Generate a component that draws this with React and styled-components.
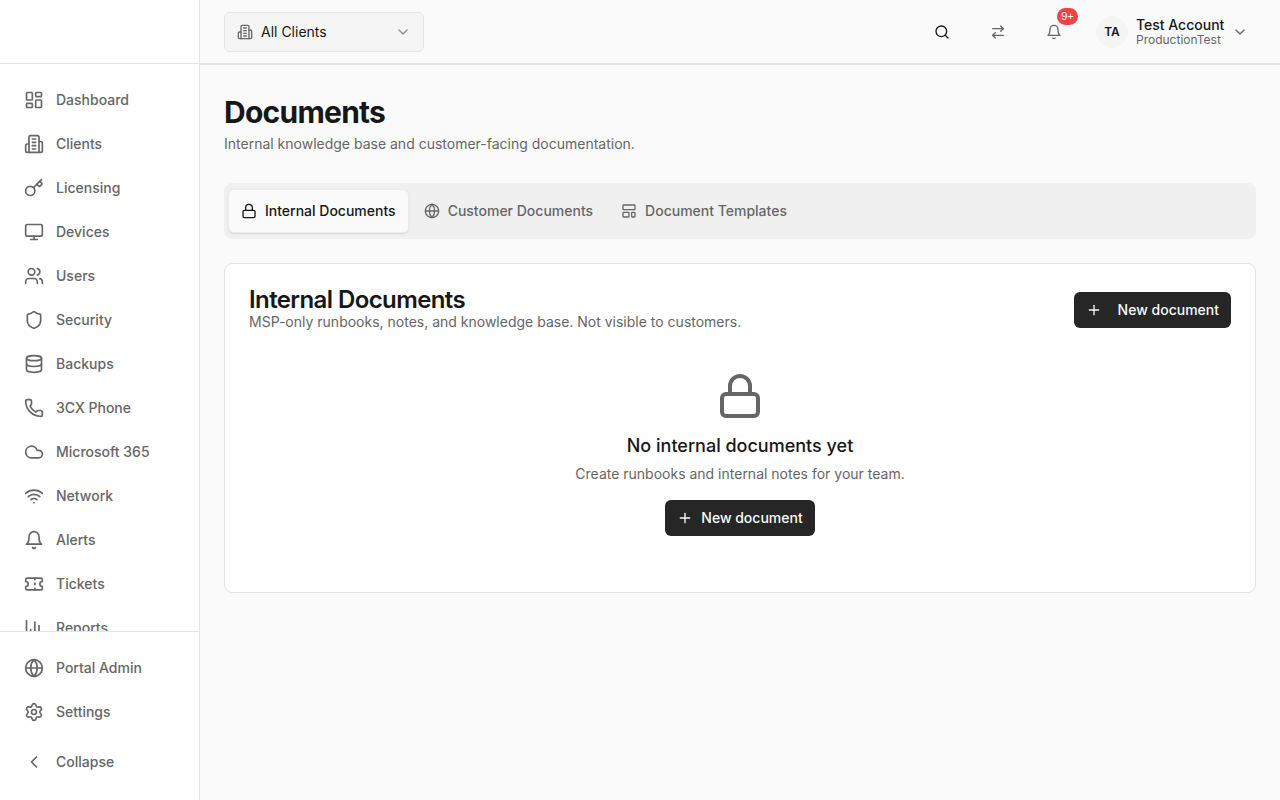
import styled, { createGlobalStyle } from "styled-components";
import {
  LayoutDashboard, Key, Monitor, Users, Shield, Database, Phone, Cloud, Wifi,
  Ticket, ChartColumn, Globe, Settings, ChevronLeft, ChevronDown, Search, ArrowRightLeft,
  Lock, LayoutTemplate, Plus,
} from "lucide-react";

const GlobalStyle = createGlobalStyle`
  * { box-sizing: border-box; }
  html, body { margin: 0; height: 100%; }
  body {
    font-family: Inter, "Liberation Sans", sans-serif;
    background: #fafafa;
    color: #171717;
  }
`;

const Shell = styled.div`
  display: flex;
  height: 800px;
  overflow: hidden;
`;

const Sidebar = styled.aside`
  width: 200px;
  flex-shrink: 0;
  display: flex;
  flex-direction: column;
  background: #fff;
  border-right: 1px solid #e5e5e5;
`;

const LogoArea = styled.div`
  height: 64px;
  flex-shrink: 0;
  border-bottom: 1px solid #e5e5e5;
`;

const NavScroll = styled.nav`
  flex: 1;
  min-height: 0;
  overflow: hidden;
  padding-top: 14px;
`;

const NavItem = styled.a`
  display: flex;
  align-items: center;
  gap: 12px;
  height: 44px;
  padding-left: 24px;
  font-size: 14px;
  line-height: 20px;
  font-weight: 500;
  color: #666;
  svg { flex-shrink: 0; }
`;

const SideFooter = styled.div`
  flex-shrink: 0;
  height: 169px;
  padding-top: 14px;
  border-top: 1px solid #e5e5e5;
`;

const CollapseItem = styled(NavItem)`
  margin-top: 6px;
`;

const Main = styled.div`
  flex: 1;
  min-width: 0;
  display: flex;
  flex-direction: column;
`;

const Topbar = styled.header`
  height: 65px;
  flex-shrink: 0;
  display: flex;
  align-items: center;
  padding: 0 24px;
  border-bottom: 2px solid #e5e5e5;
  background: #fafafa;
`;

const ClientSelect = styled.button`
  width: 200px;
  height: 40px;
  display: flex;
  align-items: center;
  gap: 8px;
  padding: 0 12px;
  background: #f5f5f5;
  border: 1px solid #e5e5e5;
  border-radius: 6px;
  font: 400 14px/20px Inter, sans-serif;
  color: #171717;
  svg:first-child { color: #666; }
  svg:last-child { margin-left: auto; color: #8a8a8a; }
`;

const TopActions = styled.div`
  margin-left: auto;
  display: flex;
  align-items: center;
`;

const IconButton = styled.button`
  position: relative;
  width: 40px;
  height: 40px;
  margin-right: 16px;
  display: flex;
  align-items: center;
  justify-content: center;
  padding: 0;
  background: none;
  border: 0;
  color: ${(props) => (props.$dark ? "#171717" : "#666")};
`;

const Badge = styled.span`
  position: absolute;
  top: -4px;
  right: -4px;
  height: 17px;
  min-width: 21px;
  padding: 0 4px;
  display: flex;
  align-items: center;
  justify-content: center;
  border-radius: 9px;
  background: #ef4444;
  color: #fff;
  font-size: 11px;
  font-weight: 500;
`;

const Account = styled.div`
  display: flex;
  align-items: center;
  gap: 8px;
  margin-left: 6px;
  margin-right: 8px;
`;

const Avatar = styled.span`
  width: 32px;
  height: 32px;
  display: flex;
  align-items: center;
  justify-content: center;
  border-radius: 50%;
  background: #f5f5f5;
  font-size: 12px;
  font-weight: 600;
`;

const AccountText = styled.div`
  display: flex;
  flex-direction: column;
  width: 88px;
  white-space: nowrap;
`;

const AccountName = styled.span`
  font-size: 14px;
  font-weight: 500;
  line-height: 16px;
`;

const AccountOrg = styled.span`
  font-size: 12px;
  line-height: 14px;
  color: #666;
`;

const AccountChevron = styled(ChevronDown)`
  color: #666;
`;

const Content = styled.main`
  padding: 24px;
`;

const PageTitle = styled.h1`
  margin: 5px 0 0;
  font-size: 30px;
  line-height: 36px;
  font-weight: 700;
  letter-spacing: -0.75px;
`;

const PageSubtitle = styled.p`
  margin: 4px 0 0;
  font-size: 14px;
  line-height: 20px;
  color: #666;
`;

const TabList = styled.div`
  margin-top: 29px;
  height: 56px;
  display: flex;
  align-items: center;
  gap: 2px;
  padding: 0 4px;
  background: #f0f0f0;
  border-radius: 8px;
`;

const Tab = styled.button`
  height: 44px;
  display: flex;
  align-items: center;
  gap: 8px;
  padding: 0 12px;
  border: 1px solid ${(props) => (props.$active ? "#ececec" : "transparent")};
  border-radius: 6px;
  font: 500 14px/20px Inter, sans-serif;
  background: ${(props) => (props.$active ? "#fafafa" : "transparent")};
  color: ${(props) => (props.$active ? "#171717" : "#666")};
  box-shadow: ${(props) => (props.$active ? "0 1px 2px rgba(0,0,0,.1)" : "none")};
`;

const Card = styled.section`
  margin-top: 24px;
  height: 330px;
  background: #fff;
  border: 1px solid #e5e5e5;
  border-radius: 8px;
  padding: 24px;
`;

const CardHead = styled.div`
  display: flex;
  justify-content: space-between;
  align-items: flex-start;
`;

const CardTitle = styled.h2`
  margin: 0;
  font-size: 24px;
  line-height: 24px;
  font-weight: 600;
  letter-spacing: -0.6px;
`;

const CardSubtitle = styled.p`
  margin: 0;
  font-size: 14px;
  line-height: 20px;
  color: #666;
`;

const PrimaryButton = styled.button`
  height: 36px;
  display: flex;
  align-items: center;
  gap: ${(props) => (props.$wide ? "16px" : "8px")};
  padding: 0 12px;
  border: 0;
  border-radius: 6px;
  background: #262626;
  color: #fafafa;
  font: 500 14px/20px Inter, sans-serif;
`;

const HeadButton = styled(PrimaryButton)`
  margin-top: 4px;
`;

const EmptyState = styled.div`
  display: flex;
  flex-direction: column;
  align-items: center;
  margin-top: 40px;
  svg.big { color: #666; }
`;

const EmptyTitle = styled.h3`
  margin: 12px 0 0;
  font-size: 18px;
  line-height: 28px;
  font-weight: 500;
`;

const EmptyText = styled.p`
  margin: 4px 0 0;
  font-size: 14px;
  line-height: 20px;
  color: #666;
`;

const EmptyButton = styled(PrimaryButton)`
  margin-top: 16px;
`;

// lucide's current Building2 and Bell differ from the ones in the screenshot
const BuildingIcon = ({ size }) => (
  <svg width={size} height={size} viewBox="0 0 24 24" fill="none" stroke="currentColor" strokeWidth="2" strokeLinecap="round" strokeLinejoin="round">
    <path d="M6 22V4a2 2 0 0 1 2-2h8a2 2 0 0 1 2 2v18Z" />
    <path d="M6 12H4a2 2 0 0 0-2 2v6a2 2 0 0 0 2 2h2" />
    <path d="M18 9h2a2 2 0 0 1 2 2v9a2 2 0 0 1-2 2h-2" />
    <path d="M10 6h4" />
    <path d="M10 10h4" />
    <path d="M10 14h4" />
    <path d="M10 18h4" />
  </svg>
);

const BellIcon = ({ size }) => (
  <svg width={size} height={size} viewBox="0 0 24 24" fill="none" stroke="currentColor" strokeWidth="2" strokeLinecap="round" strokeLinejoin="round">
    <path d="M6 8a6 6 0 0 1 12 0c0 7 3 9 3 9H3s3-2 3-9" />
    <path d="M10.3 21a1.94 1.94 0 0 0 3.4 0" />
  </svg>
);

const navItems = [
  [LayoutDashboard, "Dashboard"], [BuildingIcon, "Clients"], [Key, "Licensing"], [Monitor, "Devices"],
  [Users, "Users"], [Shield, "Security"], [Database, "Backups"], [Phone, "3CX Phone"],
  [Cloud, "Microsoft 365"], [Wifi, "Network"], [BellIcon, "Alerts"], [Ticket, "Tickets"], [ChartColumn, "Reports"],
];

export default function App() {
  return (
    <>
      <GlobalStyle />
      <Shell>
        <Sidebar>
          <LogoArea />
          <NavScroll>
            {navItems.map(([Icon, label]) => (
              <NavItem key={label}><Icon size={20} />{label}</NavItem>
            ))}
          </NavScroll>
          <SideFooter>
            <NavItem><Globe size={20} />Portal Admin</NavItem>
            <NavItem><Settings size={20} />Settings</NavItem>
            <CollapseItem><ChevronLeft size={20} />Collapse</CollapseItem>
          </SideFooter>
        </Sidebar>
        <Main>
          <Topbar>
            <ClientSelect>
              <BuildingIcon size={16} />
              All Clients
              <ChevronDown size={16} />
            </ClientSelect>
            <TopActions>
              <IconButton $dark><Search size={16} /></IconButton>
              <IconButton><ArrowRightLeft size={16} /></IconButton>
              <IconButton><BellIcon size={16} /><Badge>9+</Badge></IconButton>
              <Account>
                <Avatar>TA</Avatar>
                <AccountText>
                  <AccountName>Test Account</AccountName>
                  <AccountOrg>ProductionTest</AccountOrg>
                </AccountText>
                <AccountChevron size={16} />
              </Account>
            </TopActions>
          </Topbar>
          <Content>
            <PageTitle>Documents</PageTitle>
            <PageSubtitle>Internal knowledge base and customer-facing documentation.</PageSubtitle>
            <TabList>
              <Tab $active><Lock size={16} />Internal Documents</Tab>
              <Tab><Globe size={16} />Customer Documents</Tab>
              <Tab><LayoutTemplate size={16} />Document Templates</Tab>
            </TabList>
            <Card>
              <CardHead>
                <div>
                  <CardTitle>Internal Documents</CardTitle>
                  <CardSubtitle>MSP-only runbooks, notes, and knowledge base. Not visible to customers.</CardSubtitle>
                </div>
                <HeadButton $wide><Plus size={16} />New document</HeadButton>
              </CardHead>
              <EmptyState>
                <Lock className="big" size={48} />
                <EmptyTitle>No internal documents yet</EmptyTitle>
                <EmptyText>Create runbooks and internal notes for your team.</EmptyText>
                <EmptyButton><Plus size={16} />New document</EmptyButton>
              </EmptyState>
            </Card>
          </Content>
        </Main>
      </Shell>
    </>
  );
}
